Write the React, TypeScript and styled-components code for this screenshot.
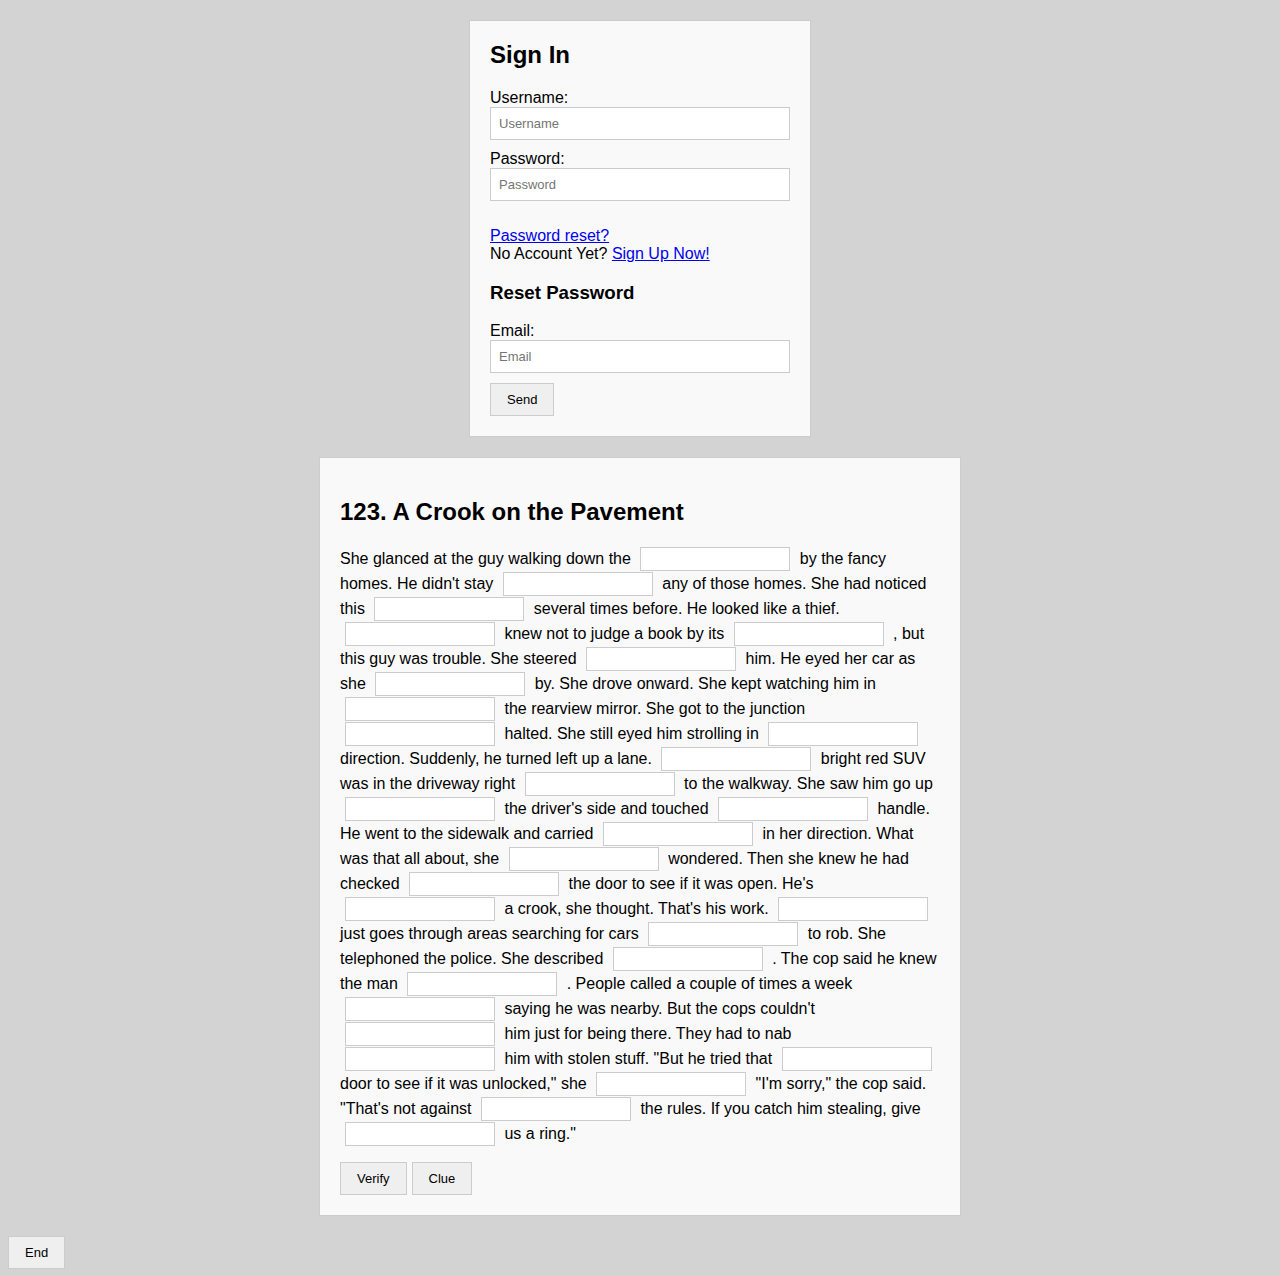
import React from "react";
import styled, { createGlobalStyle } from "styled-components";

const GlobalStyle = createGlobalStyle`
  html, body {
    margin: 0;
    padding: 0;
    background: #d3d3d3;
  }
  body {
    font-family: "Liberation Sans", Arial, sans-serif;
    font-size: 16px;
    color: #000;
  }
`;

const Page = styled.div`
  padding: 20px 8px 8px;
`;

const Card = styled.section<{ $width: number }>`
  width: ${(p) => p.$width}px;
  margin: 0 auto 20px;
  padding: 20px;
  background: #f9f9f9;
  border: 1px solid #cccccc;
`;

const Title = styled.h2<{ $flush?: boolean }>`
  font-size: 24px;
  font-weight: bold;
  margin: ${(p) => (p.$flush ? "0 0 20px" : "19.92px 0")};
`;

const SubTitle = styled.h3`
  font-size: 18.72px;
  font-weight: bold;
  margin: 18.72px 0;
`;

const Label = styled.label`
  display: block;
  font-size: 16px;
`;

const Field = styled.input`
  display: block;
  box-sizing: border-box;
  width: 100%;
  margin: 0 0 10px;
  padding: 8px;
  font-family: "Liberation Sans", Arial, sans-serif;
  font-size: 13px;
  line-height: normal;
  background: #fff;
  border: 1px solid #cccccc;
  border-radius: 0;
  outline: none;
  &::placeholder {
    color: #757575;
  }
`;

const Links = styled.div`
  margin-top: 26px;
  line-height: normal;
`;

const Link = styled.a`
  color: #0000ee;
  text-decoration: underline;
  cursor: pointer;
`;

const Button = styled.button`
  display: inline-block;
  padding: 8px 16px;
  font-family: "Liberation Sans", Arial, sans-serif;
  font-size: 13px;
  line-height: normal;
  color: #000;
  background: #efefef;
  border: 1px solid #cccccc;
  border-radius: 0;
  cursor: pointer;
`;

const Story = styled.p`
  margin: 16px 0;
  font-size: 16px;
  line-height: 25px;
`;

const Blank = styled.input`
  box-sizing: border-box;
  width: 150px;
  height: 24px;
  margin: 1px 5px 0;
  padding: 0 4px;
  vertical-align: top;
  font-family: "Liberation Sans", Arial, sans-serif;
  font-size: 13px;
  background: #fff;
  border: 1px solid #cccccc;
  border-radius: 0;
  outline: none;
`;

const ButtonRow = styled.div`
  display: flex;
  gap: 5px;
`;

const segments = [
  "She glanced at the guy walking down the",
  "by the fancy homes. He didn't stay",
  "any of those homes. She had noticed this",
  "several times before. He looked like a thief.",
  "knew not to judge a book by its",
  ", but this guy was trouble. She steered",
  "him. He eyed her car as she",
  "by. She drove onward. She kept watching him in",
  "the rearview mirror. She got to the junction",
  "halted. She still eyed him strolling in",
  "direction. Suddenly, he turned left up a lane.",
  "bright red SUV was in the driveway right",
  "to the walkway. She saw him go up",
  "the driver's side and touched",
  "handle. He went to the sidewalk and carried",
  "in her direction. What was that all about, she",
  "wondered. Then she knew he had checked",
  "the door to see if it was open. He's",
  "a crook, she thought. That's his work.",
  "just goes through areas searching for cars",
  "to rob. She telephoned the police. She described",
  ". The cop said he knew the man",
  ". People called a couple of times a week",
  "saying he was nearby. But the cops couldn't",
  "him just for being there. They had to nab",
  "him with stolen stuff. \"But he tried that",
  "door to see if it was unlocked,\" she",
  "\"I'm sorry,\" the cop said. \"That's not against",
  "the rules. If you catch him stealing, give",
  "us a ring.\"",
];

export default function App() {
  return (
    <>
      <GlobalStyle />
      <Page>
        <Card $width={300}>
          <Title $flush>Sign In</Title>
          <Label htmlFor="username">Username:</Label>
          <Field id="username" type="text" placeholder="Username" />
          <Label htmlFor="password">Password:</Label>
          <Field id="password" type="password" placeholder="Password" />
          <Links>
            <Link>Password reset?</Link>
            <br />
            No Account Yet? <Link>Sign Up Now!</Link>
          </Links>
          <SubTitle>Reset Password</SubTitle>
          <Label htmlFor="email">Email:</Label>
          <Field id="email" type="email" placeholder="Email" />
          <Button>Send</Button>
        </Card>
        <Card $width={600}>
          <Title>123. A Crook on the Pavement</Title>
          <Story>
            {segments.map((text, i) => (
              <React.Fragment key={i}>
                {i > 0 && (
                  <>
                    {" "}
                    <Blank type="text" />{" "}
                  </>
                )}
                {text}
              </React.Fragment>
            ))}
          </Story>
          <ButtonRow>
            <Button>Verify</Button>
            <Button>Clue</Button>
          </ButtonRow>
        </Card>
        <Button>End</Button>
      </Page>
    </>
  );
}
